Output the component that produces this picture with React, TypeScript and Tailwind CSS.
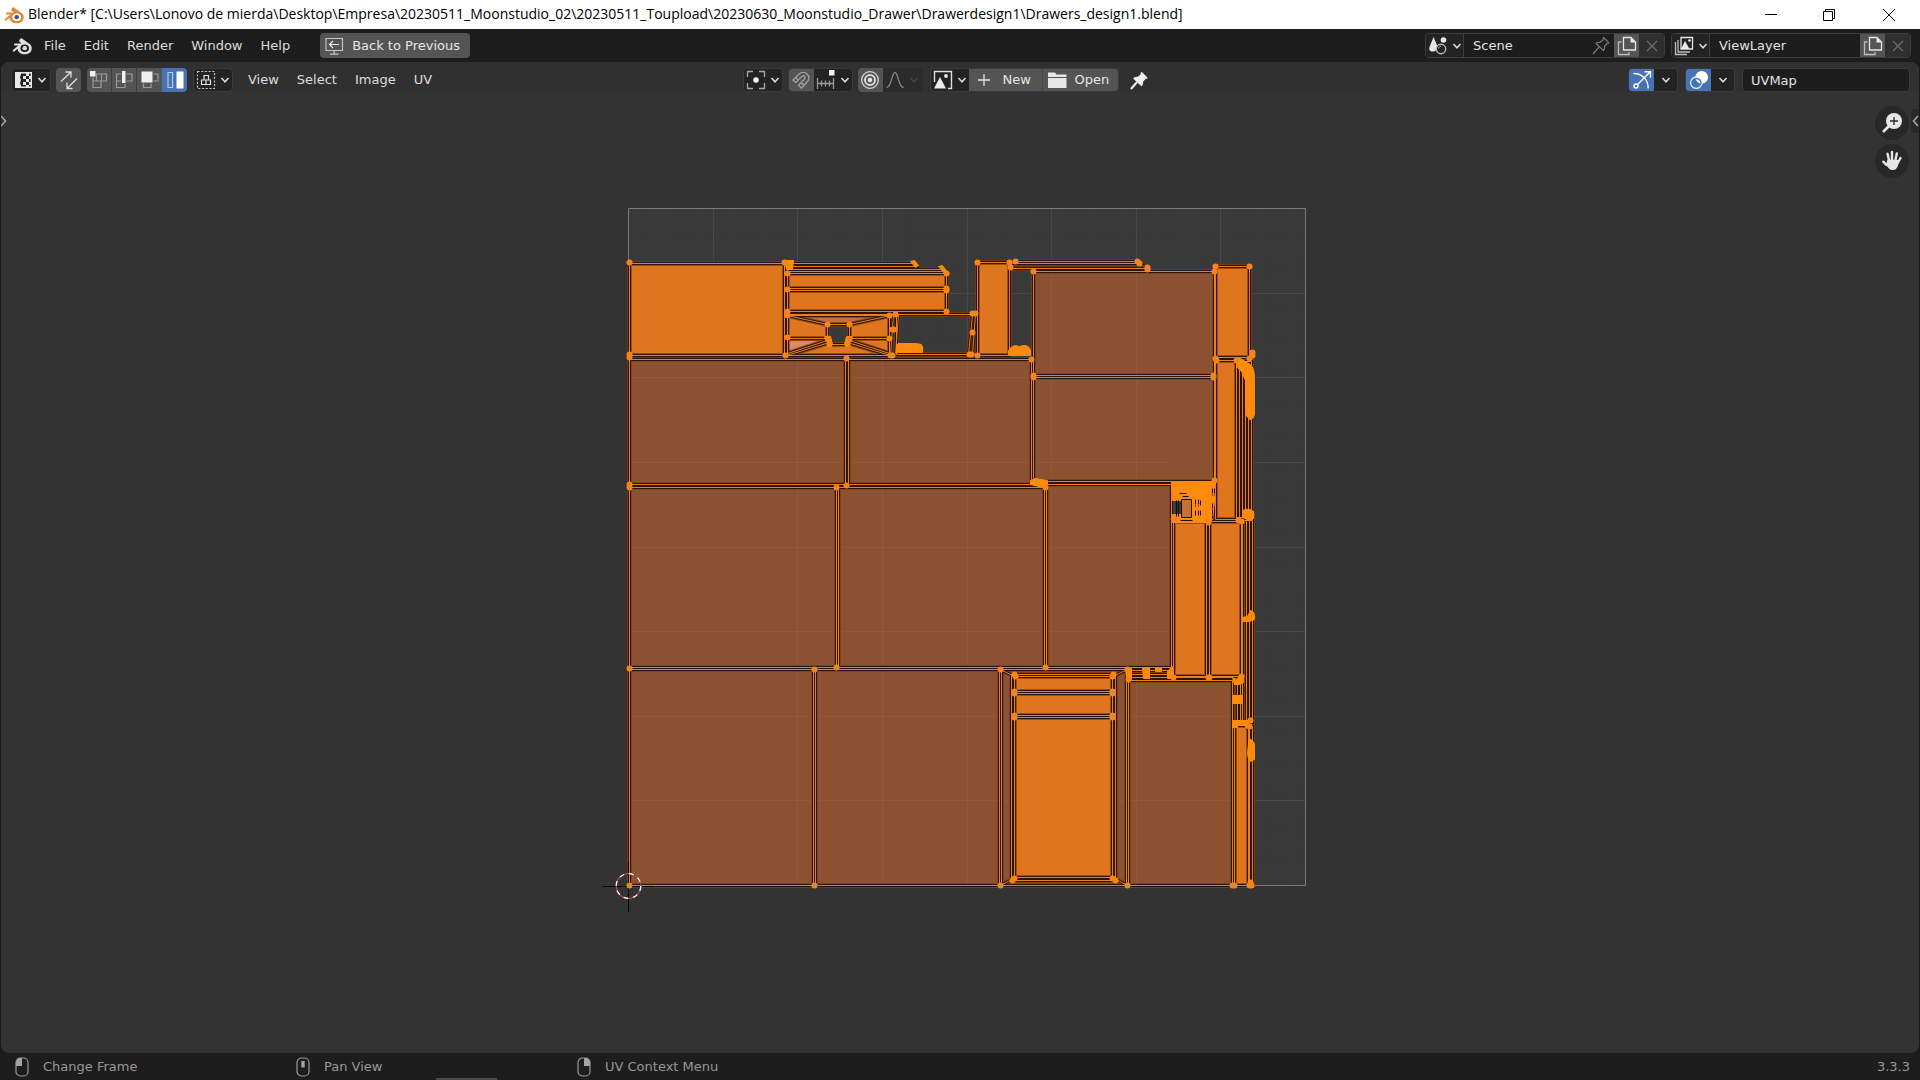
import type { ReactNode } from "react";

type Box = [number, number, number, number];
type Dot = [number, number];

const WIDGET = "flex h-6 items-center overflow-hidden rounded border border-[#3a3a3a] bg-[#232323]";

function Chevron({ dim = false }: { dim?: boolean }) {
  return (
    <svg width="10" height="8" viewBox="0 0 10 8" fill="none" stroke={dim ? "#444444" : "#d8d8d8"} strokeWidth="1.6">
      <path d="M1.5 2 5 5.8 8.5 2" />
    </svg>
  );
}

function BlenderLogo({ color, pupil, ring }: { color: string; pupil: string; ring: string }) {
  return (
    <svg width="20" height="18" viewBox="0 0 20 18" fill="none">
      <path
        d="M9.2.6 18 7c1.300 1.200 1.900 2.800 1.700 4.600-.4 3.300-3.300 5.400-7 5.400-3.900 0-6.900-2.300-7.100-5.600L2.300 14.200c-.9.6-2.200-.6-1.300-1.500L6.300 8.300H3c-1.300 0-1.400-2 0-2.100h6.600L7.500 4.400c-1-.9.200-2.500 1.700-3.800Z"
        transform="translate(0 .3)"
        fill={color}
      />
      <ellipse cx="12.700" cy="11.200" rx="4.300" ry="3.800" fill={ring} />
      <ellipse cx="12.700" cy="11.200" rx="2.300" ry="2.100" fill={pupil} />
    </svg>
  );
}

const iconScreenBack = (
  <svg width="19" height="18" viewBox="0 0 19 18" fill="none" stroke="#c4c4c4" strokeWidth="1.200">
    <path d="M1 1.500h16.500v12H1zM9.200 13.500v3.500M5 17.200h8.500" />
    <path d="M14 7.500H4.500M8 4 4.500 7.500 8 11" stroke="#ededed" />
  </svg>
);

const iconUvEditor = (
  <svg width="18" height="18" viewBox="0 0 18 18">
    <path d="M0 1h6v2.500L5 6l1 3-1 3 1 2.500V17H0z" fill="#e8e8e8" />
    <path d="M6 1.700h10.300v14.600H6" fill="none" stroke="#e8e8e8" strokeWidth="1.400" />
    <path d="M11 2h3v3h-3zM8 5h3v3H8zM11 8h3v3h-3zM8 11h3v3H8zM11 14h3v3h-3zM14 5h2v3h-2zM14 11h2v3h-2z" fill="#e8e8e8" />
  </svg>
);

const iconSync = (
  <svg width="20" height="20" viewBox="0 0 20 20" fill="none" stroke="#dddddd" strokeWidth="1.300">
    <path d="M2 11.500 12 2M6.500 2H12v5.500M18 8.500 8 18.500M8 12.500v6h5.500" />
  </svg>
);

const iconVertex = (
  <svg width="20" height="20" viewBox="0 0 20 20" fill="none" stroke="#9a9a9a" strokeWidth="1.200">
    <path d="M7.500 4h10v7h-10zM4 7.500v10h8v-6.500M4 11h8.500V4" />
    <path d="M1 1h5.500v5.500H1z" fill="#f0f0f0" stroke="none" />
  </svg>
);

const iconEdge = (
  <svg width="20" height="20" viewBox="0 0 20 20" fill="none" stroke="#9a9a9a" strokeWidth="1.200">
    <path d="M7 4H2.500v13.500H11V14M2.500 11H7M12.500 4h5.500v7h-5.500" />
    <path d="M8 1h3.500v12H8z" fill="#f0f0f0" stroke="none" />
  </svg>
);

const iconFace = (
  <svg width="20" height="20" viewBox="0 0 20 20" fill="none" stroke="#9a9a9a" strokeWidth="1.200">
    <path d="M13.500 4H18v7h-4.500M3.500 13.500v4H11v-4" />
    <path d="M1.500 1.500h11v11h-11z" fill="#f0f0f0" stroke="none" />
  </svg>
);

const iconIsland = (
  <svg width="20" height="20" viewBox="0 0 20 20" fill="none">
    <path d="M3 2.500h4.500v15H3z" stroke="#b9cae8" strokeWidth="1.200" />
    <path d="M11.500 1.500h7v17h-7z" fill="#ffffff" />
  </svg>
);

const iconSticky = (
  <svg width="20" height="20" viewBox="0 0 20 20" fill="none" stroke="#e0e0e0" strokeWidth="1.200">
    <path d="M1.500 1.500h17v17h-17z" strokeDasharray="2.200 1.500" stroke="#bdbdbd" />
    <path d="M8 5.500h4.500V10H8zM5.500 10H10v4.500H5.500zM10 10h4.500v4.500H10z" />
  </svg>
);

const iconPivot = (
  <svg width="20" height="20" viewBox="0 0 20 20" fill="none" stroke="#a8a8a8" strokeWidth="1.300">
    <path d="M1.500 7V1.500H7M13 1.500h5.500V7M18.500 13v5.500H13M7 18.500H1.500V13" />
    <circle cx="10" cy="10" r="2.800" fill="#f0f0f0" stroke="none" />
  </svg>
);

const iconMagnet = (
  <svg width="20" height="20" viewBox="0 0 20 20" fill="none" stroke="#a2a2a2" strokeWidth="1.300">
    <path d="M2 10 8.200 4C13.500-.8 21 6 16.300 11.700L10.500 18l-3-2.800 5.800-6c2-2.500-.7-4.600-2.600-2.600l-5.900 6ZM4.500 7.600l2.800 2.600M13 15.300l-2.800-2.600" />
  </svg>
);

const iconSnap = (
  <svg width="20" height="20" viewBox="0 0 20 20" fill="none" stroke="#9c9c9c" strokeWidth="1.300">
    <path d="M1.500 8v11M17.500 8v11M1.500 13.500h16M5.500 10.500v6M9.500 10.500v6M13.500 10.500v6" />
    <path d="M13 0h5.500v5.500H13z" fill="#f0f0f0" stroke="none" />
  </svg>
);

const iconProportional = (
  <svg width="20" height="20" viewBox="0 0 20 20" fill="none" stroke="#d9d9d9">
    <circle cx="10" cy="10" r="8.300" strokeWidth="1.300" />
    <circle cx="10" cy="10" r="5" strokeWidth="2" />
    <circle cx="10" cy="10" r="2.300" fill="#e8e8e8" stroke="none" />
  </svg>
);

const iconFalloff = (
  <svg width="20" height="20" viewBox="0 0 20 20" fill="none" stroke="#868686" strokeWidth="1.300">
    <path d="M1.500 17.500C7 17 6.500 2.500 10 2.500S13 17 18.500 17.500" />
  </svg>
);

const iconImage = (
  <svg width="20" height="20" viewBox="0 0 20 20" fill="none">
    <path d="M1.500 12V1.500h17v17H15" stroke="#e0e0e0" strokeWidth="1.400" />
    <path d="M1 18.500 7 7l6 11.500z" fill="#ececec" />
    <circle cx="13" cy="6" r="1.900" fill="#ececec" />
  </svg>
);

const iconFolder = (
  <svg width="19" height="18" viewBox="0 0 19 18" fill="#e6e6e6">
    <path d="M0 1.500h7l1.500 2h10v2.500H0zM0 7h18.500v10H0z" />
  </svg>
);

function Pin({ outline = false }: { outline?: boolean }) {
  return (
    <svg width="18" height="19" viewBox="0 0 18 19" fill={outline ? "none" : "#f2f2f2"} stroke={outline ? "#777777" : "#f2f2f2"} strokeWidth="1.200" strokeLinejoin="round">
      <path d="m11.500 1.500 5.500 5.500-2 .5-2.500 3c.3 1.500 0 3-1 4L4 7.500c1-1 2.500-1.200 4-1l3-2.800z" />
      <path d="M7 11 1 18" strokeWidth={outline ? 1.2 : 2} />
    </svg>
  );
}

const iconScene = (
  <svg width="20" height="20" viewBox="0 0 20 20" fill="none">
    <path d="M5.500 1 9 9c.6 3-.5 6.500-4 6.500S.8 13.500 1.500 11z" fill="#e8e8e8" />
    <circle cx="15.500" cy="4" r="2.800" fill="#e8e8e8" />
    <circle cx="13" cy="13" r="4.700" fill="#232323" stroke="#b8b8b8" strokeWidth="1.400" />
    <path d="M10.500 12.500c.3-1.500 1.300-2.200 2.500-2.200" stroke="#b8b8b8" />
  </svg>
);

const iconLayers = (
  <svg width="20" height="20" viewBox="0 0 20 20" fill="none" stroke="#bdbdbd" strokeWidth="1.300">
    <path d="M1.500 6v12.500H13M4 4v12h12" />
    <path d="M7 1.500h11.500v11.500H7z" stroke="#e8e8e8" />
    <path d="m7 13 4-8 4.500 8z" fill="#ececec" stroke="none" />
    <circle cx="15.500" cy="4.500" r="1.300" fill="#ececec" stroke="none" />
  </svg>
);

const iconCopy = (
  <svg width="20" height="20" viewBox="0 0 20 20" fill="none" stroke="#bcbcbc" strokeWidth="1.300">
    <path d="M4.500 6H1.500v12.500H12V16" />
    <path d="M6.500 1.500h7.500l4.500 4.500v8H6.500z" stroke="#e8e8e8" />
    <path d="M13.500 1.500v5h5z" fill="#e8e8e8" stroke="none" />
  </svg>
);

const iconClear = (
  <svg width="12" height="12" viewBox="0 0 12 12" stroke="#6c6c6c" strokeWidth="1.300">
    <path d="m1 1 10 10M11 1 1 11" />
  </svg>
);

const iconGizmo = (
  <svg width="20" height="20" viewBox="0 0 20 20" fill="none" stroke="#ffffff" strokeWidth="1.400">
    <path d="M1.500 3.500c9 0 14.500 6 14.800 15M5.500 14.500 17.500 2.500M12.500 1.800h6v6" />
    <circle cx="4" cy="16" r="2" />
  </svg>
);

const iconOverlay = (
  <svg width="20" height="20" viewBox="0 0 20 20" fill="none">
    <circle cx="12.700" cy="7.300" r="6.300" fill="#ffffff" />
    <circle cx="7.300" cy="12.700" r="5.700" stroke="#dfe7f5" strokeWidth="1.300" />
    <path d="M6.700 8.500a5.700 5.700 0 0 1 5.500 5" stroke="#4772b3" strokeWidth="1.300" />
  </svg>
);

function Mouse({ button }: { button: "left" | "middle" | "right" }) {
  return (
    <svg width="14" height="20" viewBox="0 0 14 20" fill="none" stroke="#9a9a9a" strokeWidth="1.200">
      <rect x="1" y="1" width="12" height="18" rx="4.500" />
      {button === "left" && <path d="M7 1v8H1V5.500C1 3 3 1 5.500 1z" fill="#a5a5a5" stroke="none" />}
      {button === "middle" && <rect x="5.300" y="4" width="3.400" height="6.500" fill="#a5a5a5" stroke="none" />}
      {button === "right" && <path d="M7 1v8h6V5.500C13 3 11 1 8.500 1z" fill="#a5a5a5" stroke="none" />}
    </svg>
  );
}

function Drop({ label, children, className = "" }: { label: string; children: ReactNode; className?: string }) {
  return (
    <button type="button" aria-label={label} aria-haspopup="menu" className={`flex h-full w-[38px] shrink-0 items-center justify-center gap-1 ${className}`}>
      {children}
      <Chevron />
    </button>
  );
}

function Square({ label, children, className = "" }: { label: string; children: ReactNode; className?: string }) {
  return (
    <button type="button" aria-label={label} className={`flex h-full w-[25px] shrink-0 items-center justify-center ${className}`}>
      {children}
    </button>
  );
}

function TitleBar() {
  return (
    <header className="flex h-[29px] shrink-0 items-center bg-white pl-1 text-black">
      <BlenderLogo color="#e08a34" ring="#ffffff" pupil="#2f5b8c" />
      <h1 className="ml-1 whitespace-nowrap pb-px font-['Open_Sans','Noto_Sans',sans-serif] text-[14px] leading-5">
        Blender* [C:\Users\Lonovo de mierda\Desktop\Empresa\20230511_Moonstudio_02\20230511_Toupload\20230630_Moonstudio_Drawer\Drawerdesign1\Drawers_design1.blend]
      </h1>
      <div className="ml-auto flex h-full">
        <button type="button" aria-label="Minimize" className="flex w-[58px] items-center justify-center">
          <svg width="12" height="12" viewBox="0 0 12 12" stroke="#000"><path d="M0 5.500h12" /></svg>
        </button>
        <button type="button" aria-label="Restore" className="flex w-[58px] items-center justify-center">
          <svg width="12" height="12" viewBox="0 0 12 12" fill="none" stroke="#000"><path d="M.5 2.500h9v9h-9zM2.500 2.500v-2h9v9h-2" /></svg>
        </button>
        <button type="button" aria-label="Close" className="flex w-[62px] items-center justify-center">
          <svg width="12" height="12" viewBox="0 0 12 12" stroke="#000"><path d="m0 0 12 12M12 0 0 12" /></svg>
        </button>
      </div>
    </header>
  );
}

function DataField({ label, value, icon, pin = false }: { label: string; value: string; icon: ReactNode; pin?: boolean }) {
  return (
    <div className="flex h-[25px] w-60 items-center overflow-hidden rounded border border-[#3d3d3d] bg-[#1d1d1d]">
      <Drop label={`Browse ${label}`} className="border-r border-[#3d3d3d] bg-[#232323]">{icon}</Drop>
      <input aria-label={label} defaultValue={value} className="h-full min-w-0 flex-1 bg-transparent pl-[9px] text-[#e2e2e2] outline-none" />
      {pin && <button type="button" aria-label="Pin scene" className="mr-1"><Pin outline /></button>}
      <Square label={`New ${label}`} className="bg-[#545454]">{iconCopy}</Square>
      <Square label={`Remove ${label}`} className="bg-[#2f2f2f]">{iconClear}</Square>
    </div>
  );
}

function TopBar() {
  return (
    <nav className="flex h-[33px] shrink-0 items-center bg-[#1d1d1d] pr-[9px] pl-3 text-[#dddddd]">
      <button type="button" aria-label="Blender menu"><BlenderLogo color="#e0e0e0" ring="#1d1d1d" pupil="#e0e0e0" /></button>
      <div className="ml-3 flex gap-[18px]">
        {["File", "Edit", "Render", "Window", "Help"].map((item) => (
          <button type="button" key={item}>{item}</button>
        ))}
      </div>
      <button type="button" className="ml-[30px] flex h-[25px] w-[150px] items-center gap-2 whitespace-nowrap rounded bg-[#545454] pl-[5px] text-[#e6e6e6]">
        {iconScreenBack}
        Back to Previous
      </button>
      <div className="ml-auto flex gap-[6px]">
        <DataField label="Scene" value="Scene" icon={iconScene} pin />
        <DataField label="View layer" value="ViewLayer" icon={iconLayers} />
      </div>
    </nav>
  );
}

function EditorHeader() {
  return (
    <div className="grid h-[30px] grid-cols-[1fr_auto_1fr] items-end rounded-t-lg bg-[#303030] text-[#dddddd]">
      <div className="flex items-center pl-[10px]">
        <div className={WIDGET}><Drop label="Editor type">{iconUvEditor}</Drop></div>
        <div className="ml-[5px] flex h-6 items-center overflow-hidden rounded bg-[#545454]">
          <Square label="UV sync selection">{iconSync}</Square>
        </div>
        <div className="ml-[6px] flex h-6 overflow-hidden rounded">
          <Square label="Vertex select" className="border-r border-[#3f3f3f] bg-[#545454]">{iconVertex}</Square>
          <Square label="Edge select" className="border-r border-[#3f3f3f] bg-[#545454]">{iconEdge}</Square>
          <Square label="Face select" className="bg-[#545454]">{iconFace}</Square>
          <Square label="Island select" className="bg-[#4772b3]">{iconIsland}</Square>
        </div>
        <div className={`ml-[6px] ${WIDGET}`}><Drop label="Sticky selection mode">{iconSticky}</Drop></div>
        <div className="ml-[15px] flex gap-[18px]">
          {["View", "Select", "Image", "UV"].map((item) => (
            <button type="button" key={item}>{item}</button>
          ))}
        </div>
      </div>
      <div className="flex items-center gap-[5px] pr-[30px]">
        <div className={WIDGET}><Drop label="Pivot point">{iconPivot}</Drop></div>
        <div className={WIDGET}>
          <Square label="Snap" className="bg-[#545454]">{iconMagnet}</Square>
          <Drop label="Snap target">{iconSnap}</Drop>
        </div>
        <div className="flex h-6 items-center overflow-hidden rounded bg-[#2b2b2b]">
          <Square label="Proportional editing" className="bg-[#545454]">{iconProportional}</Square>
          <button type="button" aria-label="Falloff" disabled className="flex w-[39px] items-center justify-center gap-1">{iconFalloff}<Chevron dim /></button>
        </div>
        <div className={`ml-[3px] ${WIDGET}`}>
          <Drop label="Browse image">{iconImage}</Drop>
          <button type="button" className="flex h-full w-[74px] items-center gap-[13px] border-r border-[#464646] bg-[#545454] pl-[9px] text-[#e6e6e6]">
            <svg width="12" height="12" viewBox="0 0 12 12" stroke="#e6e6e6" strokeWidth="1.300"><path d="M6 0v12M0 6h12" /></svg>
            New
          </button>
          <button type="button" className="flex h-full w-[75px] items-center gap-2 bg-[#545454] pl-[5px] text-[#e6e6e6]">
            {iconFolder}
            Open
          </button>
        </div>
        <button type="button" aria-label="Pin image" className="ml-[6px]"><Pin /></button>
      </div>
      <div className="flex items-center justify-end gap-[7px] pr-[9px]">
        <div className={WIDGET}>
          <Square label="Show gizmos" className="bg-[#4772b3]">{iconGizmo}</Square>
          <button type="button" aria-label="Gizmo options" className="flex w-[23px] justify-center"><Chevron /></button>
        </div>
        <div className={WIDGET}>
          <Square label="Show overlays" className="bg-[#4772b3]">{iconOverlay}</Square>
          <button type="button" aria-label="Overlay options" className="flex w-[23px] justify-center"><Chevron /></button>
        </div>
        <input aria-label="Active UV map" defaultValue="UVMap" className="h-6 w-[168px] rounded border border-[#3a3a3a] bg-[#1d1d1d] pl-[8px] text-[#e2e2e2] outline-none" />
      </div>
    </div>
  );
}

/* UV islands, as [left, top, right, bottom] in canvas units */
const brownFaces: Box[] = [
  [629, 359, 845, 484], [848, 359, 1031, 484], [1033, 271, 1214, 375], [1033, 377, 1214, 481],
  [629, 487, 836, 667], [838, 487, 1044, 667], [1046, 484, 1171, 667],
  [629, 669, 813, 885], [815, 669, 999, 885], [1128, 680, 1232, 885],
  [1001, 669, 1126, 885],
  [1236, 361, 1251, 517], [1249, 726, 1252, 885],
];
const brightFaces: Box[] = [
  [629, 263, 784, 355], [787, 273, 946, 288], [787, 290, 946, 311], [977, 262, 1009, 355],
  [1215, 266, 1249, 357], [1215, 360, 1236, 519], [1014, 676, 1112, 691], [1014, 693, 1112, 715],
  [1014, 717, 1112, 877], [1234, 725, 1248, 885],
  [787, 315, 889, 355], [1173, 521, 1206, 676], [1209, 521, 1241, 676],
];
const sideFaces: Box = [1242, 520, 1252, 722];
const seams = [
  "M787 263H913L916 266H787M787 269H941L944 271H787",
  "M1014 261H1137L1140 263H1012M1010 268H1147",
  "M787 314H975M896 313V354M893 314 890 355M898 314 895 353M896 354H970M972 314 968 354M975 313 972 354",
  "M787 315 827 324M890 315 849 324M787 338H827M849 338H889M786 355 829 342M890 355 847 342M787 353 827 340M889 353 849 340",
  "M827 324H849V339L847 344H829L827 338Z",
  "M787 263V355M1000 669 1014 676M1127 669 1112 676M1000 885 1015 877M1127 885 1112 877M1011 674V880H1115V674Z",
  "M1239 362V517M1242 362V517M1245 364V517M1248 366V517M1246 520V722M1249 520V722",
  "M1128 670H1173M1128 674H1173M1128 677H1232M1237 680V722M1240 680V722M1233 724H1250",
];
const solidClusters = [
  "M896 345q1-3 5-2h15l5 1q2 3 1 8H896z",
  "M1008 355v-5q3-5 7-5l4 1 4-1q6 0 7 5v5z",
  "M1235 358h5l10 6q4 4 4 14v36q-2 6-5 5l-4-5v-34l-4-9-4-4z",
  "M1171 481h43v20l-2 18-3 3h-37q-3-3 0-8h9v-14h-9z",
  "M1242 510q6-3 11 1 2 9-4 9l-7-3zM1242 617l5-1 3-6q5 1 4 9l-5 2h-7zM1232 677l4 2 4-4q4 2 3 7l-4 2h-5zM1232 695h10v8h-10zM1232 720h17v7h-4v-2h-8v2h-5zM1249 738q5 3 5 6v15l-4 2q-3-4-3-8l1-10z",
  "M1125 668h6v11h-5zM1142 667h7v11h-6zM1155 667h6v4h-6zM1167 671l5-5v12h-5z",
  "M1030 480l5-2 12 2v4l-4 3-13-3z",
  "M824 336h6l2 8-4 1zM852 336h-6l-2 8 4 1zM784 260h9l-1 9h-6zM910 261l4-1 4 5-3 2zM938 266l4-1 6 8-3 1z",
];
const vertices: Dot[] = [
  [629, 262], [784, 262], [629, 354], [629, 357], [785, 355], [787, 273], [787, 289], [787, 311], [787, 315], [787, 337],
  [946, 273], [946, 288], [946, 290], [946, 311], [827, 324], [849, 324], [827, 338], [829, 344], [849, 339], [847, 344],
  [889, 315], [895, 314], [893, 329], [892, 329], [889, 338], [890, 355], [892, 355], [972, 313], [975, 313], [972, 332], [969, 354], [971, 354],
  [977, 262], [977, 355], [1009, 262], [1010, 267], [1015, 261], [1137, 261], [1139, 263], [1147, 267], [1147, 269],
  [1033, 271], [1214, 271], [1215, 266], [1249, 266], [1033, 375], [1033, 377], [1213, 375], [1213, 377], [1214, 480],
  [846, 358], [1031, 359], [629, 484], [629, 487], [846, 485], [836, 487], [1045, 487],
  [1215, 358], [1216, 360], [1249, 358], [1252, 352], [1252, 355], [1236, 360],
  [629, 668], [836, 667], [1045, 667], [814, 669], [1000, 669], [1127, 669], [1014, 674], [1015, 676], [1113, 674], [1112, 676],
  [1014, 691], [1014, 693], [1014, 715], [1014, 717], [1112, 691], [1112, 693], [1112, 715], [1112, 717],
  [1014, 878], [1012, 880], [1112, 878], [1115, 880], [629, 885], [814, 885], [1000, 885], [1127, 885], [1232, 885], [1234, 885], [1249, 885], [1251, 885], [1250, 882],
  [1174, 519], [1208, 522], [1238, 520], [1241, 521], [1128, 679], [1173, 677], [1208, 677], [1209, 677], [1241, 676], [1250, 720], [1249, 726],
];
const majorLines = [1, 2, 3, 4, 5, 6, 7];
const minorLines = Array.from({ length: 63 }, (_, i) => i + 1);

const boxPath = ([l, t, r, b]: Box) => `M${l} ${t}H${r}V${b}H${l}Z`;
const edgePath = [...brownFaces, ...brightFaces, sideFaces].map(boxPath).join("") + seams.join("");

function UvLayout() {
  return (
    <svg role="img" aria-label="UV layout" viewBox="600 190 720 765" className="h-[765px] w-[720px]" fill="none">
      <path d="M628.500 208.500H1305.500V885.500H628.500Z" fill="#393939" />
      {minorLines.map((i) => (
        <path key={i} d={`M${628.5 + i * 10.58} 209V885M629 ${208.5 + i * 10.58}H1305`} stroke="#3c3c3c" />
      ))}
      {majorLines.map((i) => (
        <path key={i} d={`M${Math.round(628 + i * 84.63) + 0.5} 209V885M629 ${Math.round(208 + i * 84.63) + 0.5}H1305`} stroke="#474747" />
      ))}
      <path d="M628.500 208.500H1305.500V885.500H628.500Z" stroke="#7b7b7b" />
      <g transform="translate(.5 .5)">
        <path d="M629 359H1031V481H1171V669H1232V885H629ZM1033 271H1214V481H1033Z" fill="#7d3f08" />
        <path d={brownFaces.map(boxPath).join("") + boxPath(sideFaces)} fill="#8b5130" />
        {majorLines.map((i) => (
          <path key={i} d={`M${Math.round(628 + i * 84.63)} ${i < 5 ? 359 : 271}V${i < 7 ? 885 : 271}M${i < 2 ? 1033 : 629} ${Math.round(208 + i * 84.63)}H${i < 3 ? 1171 : i < 6 ? 1171 : 1232}`} stroke="#9a6242" strokeOpacity={i < 2 ? 0 : 0.5} />
        ))}
        <path d={brightFaces.map(boxPath).join("")} fill="#df751e" />
        <path d="M787 315 827 324H849L889 315Z" fill="#c86c3c" />
        <path d="M787 341H826L787 354Z" fill="#df8a68" />
        <path d="M827 324H849V344H827Z" fill="#393939" />
        <path d={edgePath} stroke="#7d3f08" strokeWidth="5" strokeOpacity=".7" />
        <path d={edgePath} stroke="#200c10" strokeWidth="3" strokeOpacity=".85" />
        <path d={edgePath} stroke="#e8801c" strokeWidth="1" />
        <path d={solidClusters.join("")} fill="#ff8a0c" stroke="#ff8a0c" strokeLinejoin="round" />
        <path d="M1181 499H1191V517H1181Z" fill="#c8702f" stroke="#1c0b0b" />
        <path d="M1176 500V516M1178 500V516M1179 493H1186M1182 496H1188M1180 520H1192" stroke="#1c0b0b" />
        <path d="M1195 499V506M1198 499V506M1200 500V506M1195 510V516M1198 510V516M1200 510V515M1212 488V495M1214 488V495M1212 503V518" stroke="#1c0b0b" strokeDasharray="5 1" />
        {vertices.map(([x, y]) => (
          <circle key={`${x}-${y}`} cx={x} cy={y} r="3" fill="#f5851a" />
        ))}
      </g>
      <path d="M603 886.500H621M636 886.500H654M628.500 862V879M628.500 894V912" stroke="#000000" />
      <circle cx="628.500" cy="886" r="12.300" stroke="#a8464b" strokeWidth="1.300" />
      <circle cx="628.500" cy="886" r="12.300" stroke="#ffffff" strokeWidth="1.300" strokeDasharray="4.830 4.830" />
      <path d="M617 886.500H640M628.500 875V897" stroke="#000000" strokeOpacity=".5" />
      <circle cx="629.500" cy="885.500" r="2.600" fill="#f5851a" />
    </svg>
  );
}

function Editor() {
  return (
    <main className="relative mx-px flex min-h-0 flex-1 flex-col overflow-hidden rounded-lg bg-[#333333]">
      <EditorHeader />
      <section aria-label="UV canvas" className="flex min-h-0 flex-1 items-center justify-center">
        <UvLayout />
      </section>
      <button type="button" aria-label="Open toolbar" className="absolute top-[49px] left-0 flex h-5 w-[7px] items-center">
        <svg width="6" height="12" viewBox="0 0 6 12" fill="none" stroke="#aaaaaa" strokeWidth="1.500"><path d="m0 1 4.500 5L0 11" /></svg>
      </button>
      <button type="button" aria-label="Open sidebar" className="absolute top-[47px] right-0 flex h-6 w-2 items-center rounded-l bg-[#292929]">
        <svg width="8" height="12" viewBox="0 0 8 12" fill="none" stroke="#aaaaaa" strokeWidth="1.500"><path d="M7 1 2.500 6 7 11" /></svg>
      </button>
      <div className="absolute top-11 right-[10px] flex flex-col gap-1">
        <button type="button" aria-label="Zoom" className="flex size-[34px] items-center justify-center rounded-full bg-[#282828]">
          <svg width="22" height="22" viewBox="0 0 22 22">
            <path d="m9 13-7 7" stroke="#e6e6e6" strokeWidth="2.600" />
            <circle cx="13" cy="9" r="8" fill="#e6e6e6" />
            <path d="M13 5v8M9 9h8" stroke="#282828" strokeWidth="1.300" />
          </svg>
        </button>
        <button type="button" aria-label="Pan" className="flex size-[34px] items-center justify-center rounded-full bg-[#282828]">
          <svg width="22" height="22" viewBox="0 0 22 22" fill="none" stroke="#e6e6e6" strokeLinecap="round">
            <path d="M8 10 6.500 3.800M11 9.500V2M14.500 10l1.300-6.500M17 12.500 19.500 8M5.500 15 2.300 11.700" strokeWidth="2.400" />
            <path d="M6.500 9.500 17 10l.8 2.500c-.8 4-2.300 7.500-6 7.500-3.200 0-4.800-2-6.800-5.500z" fill="#e6e6e6" stroke="none" />
          </svg>
        </button>
      </div>
    </main>
  );
}

function StatusBar() {
  return (
    <footer className="relative flex h-[27px] shrink-0 items-center bg-[#1d1d1d] pr-[10px] pl-[15px] text-[#979797]">
      <span className="flex w-[281px] items-center gap-[14px]"><Mouse button="left" />Change Frame</span>
      <span className="flex w-[281px] items-center gap-[14px]"><Mouse button="middle" />Pan View</span>
      <span className="flex items-center gap-[14px]"><Mouse button="right" />UV Context Menu</span>
      <span className="ml-auto">3.3.3</span>
      <span className="absolute bottom-0 left-[436px] h-[2px] w-[61px] bg-[#4c4c4c]" />
    </footer>
  );
}

export default function App() {
  return (
    <div className="flex h-screen flex-col overflow-hidden bg-[#1a1a1a] font-['DejaVu_Sans',sans-serif] text-[13px] leading-4">
      <TitleBar />
      <TopBar />
      <Editor />
      <StatusBar />
    </div>
  );
}
